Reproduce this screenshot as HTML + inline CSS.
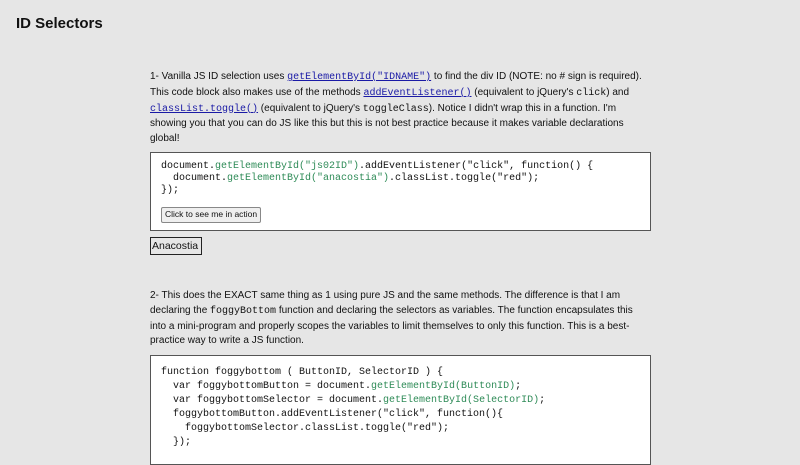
<!DOCTYPE html>
<html><head><style>
body{margin:0;background:#e6e6e6;font-family:"Liberation Sans",sans-serif;color:#111;width:800px;height:450px;overflow:hidden;position:relative}
h1{position:absolute;left:16px;top:15px;margin:0;font-size:15px;font-weight:bold}
.p{position:absolute;left:150px;width:500px;font-size:10px;line-height:14.8px}
code{font-family:"Liberation Mono",monospace;font-size:10px}
a{color:#1a1aa6;text-decoration:underline}
.box{position:absolute;left:150px;width:478px;background:#fff;border:1px solid #555;padding:0 10px;font-family:"Liberation Mono",monospace;font-size:10px;white-space:pre;color:#111}
.g{color:#2e8b57}
.btn{position:absolute;left:10px;top:54px;font-family:"Liberation Sans",sans-serif;font-size:8.5px;background:#efefef;border:1px solid #888;border-radius:2px;padding:1px 3px}
.ana{position:absolute;left:150px;top:237px;border:1px solid #222;font-size:10.5px;padding:2px 1px;width:48px}
</style></head><body>
<h1>ID Selectors</h1>
<div class="p" style="top:70px">1- Vanilla JS ID selection uses <a><code>getElementById("IDNAME")</code></a> to find the div ID (NOTE: no # sign is required). This code block also makes use of the methods <a><code>addEventListener()</code></a> (equivalent to jQuery's <code>click</code>) and <a><code>classList.toggle()</code></a> (equivalent to jQuery's <code>toggleClass</code>). Notice I didn't wrap this in a function. I'm showing you that you can do JS like this but this is not best practice because it makes variable declarations global!</div>
<div class="box" style="top:152px;height:79px;line-height:11.8px;padding-top:8px;box-sizing:border-box;width:501px">document.<span class="g">getElementById("js02ID")</span>.addEventListener("click", function() {
  document.<span class="g">getElementById("anacostia")</span>.classList.toggle("red");
});<span class="btn">Click to see me in action</span></div>
<div class="ana">Anacostia</div>
<div class="p" style="top:289px">2- This does the EXACT same thing as 1 using pure JS and the same methods. The difference is that I am declaring the <code>foggyBottom</code> function and declaring the selectors as variables. The function encapsulates this into a mini-program and properly scopes the variables to limit themselves to only this function. This is a best-practice way to write a JS function.</div>
<div class="box" style="top:355px;height:110px;line-height:14px;padding-top:10px;box-sizing:border-box;width:501px">function foggybottom ( ButtonID, SelectorID ) {
  var foggybottomButton = document.<span class="g">getElementById(ButtonID)</span>;
  var foggybottomSelector = document.<span class="g">getElementById(SelectorID)</span>;
  foggybottomButton.addEventListener("click", function(){
    foggybottomSelector.classList.toggle("red");
  });</div>
</body></html>
